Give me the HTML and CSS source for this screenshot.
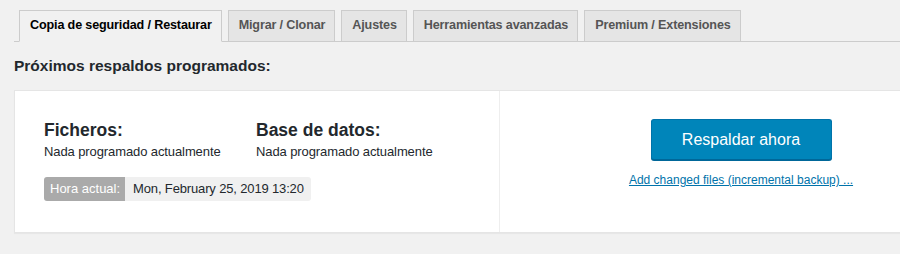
FILE: index.html
```html
<!DOCTYPE html>
<html lang="es">
<head>
<meta charset="utf-8">
<title>Copia de seguridad</title>
<link rel="stylesheet" href="styles.css">
</head>
<body>
<div class="wrap">
  <nav class="tabs">
    <a class="tab active">Copia de seguridad / Restaurar</a>
    <a class="tab">Migrar / Clonar</a>
    <a class="tab">Ajustes</a>
    <a class="tab">Herramientas avanzadas</a>
    <a class="tab">Premium / Extensiones</a>
  </nav>
  <h2 class="title">Próximos respaldos programados:</h2>
  <div class="panel">
    <div class="left">
      <div class="cols">
        <div class="col">
          <h3>Ficheros:</h3>
          <p>Nada programado actualmente</p>
        </div>
        <div class="col">
          <h3>Base de datos:</h3>
          <p>Nada programado actualmente</p>
        </div>
      </div>
      <div class="time"><span class="time-label">Hora actual:</span><span class="time-value">Mon, February 25, 2019 13:20</span></div>
    </div>
    <div class="right">
      <button class="btn">Respaldar ahora</button>
      <a class="inc" href="#">Add changed files (incremental backup) ...</a>
    </div>
  </div>
</div>
</body>
</html>
```
FILE: styles.css
```css
html, body {
  margin: 0;
  padding: 0;
  background: #f1f1f1;
  overflow: hidden;
}
body {
  font-family: "Liberation Sans", Arial, sans-serif;
  color: #23282d;
  width: 900px;
  height: 254px;
}
.wrap {
  padding: 10px 0 0 14px;
  width: 967px;
}
.tabs {
  display: flex;
  gap: 6px;
  padding-left: 5px;
  border-bottom: 1px solid #ccc;
  height: 31px;
}
.tab {
  box-sizing: border-box;
  height: 31px;
  padding: 0 9px 0 10px;
  font-size: 12.6px;
  letter-spacing: -0.15px;
  font-weight: 600;
  line-height: 29px;
  color: #555;
  background: #e5e5e5;
  border: 1px solid #ccc;
  border-bottom: none;
  white-space: nowrap;
}
.tab.active {
  background: #f1f1f1;
  color: #000;
  height: 32px;
  border-bottom: 1px solid #f1f1f1;
}
.title {
  margin: 14px 0 0 0;
  font-size: 15.5px;
  font-weight: 600;
  line-height: 20px;
  color: #23282d;
}
.panel {
  margin-top: 14px;
  display: grid;
  grid-template-columns: 485px 482px;
  background: #fff;
  border: 1px solid #e5e5e5;
  box-shadow: 0 1px 1px rgba(0,0,0,0.04);
  height: 143px;
  box-sizing: border-box;
}
.left {
  padding: 28px 0 0 29px;
  border-right: 1px solid #eee;
}
.cols {
  display: flex;
}
.col {
  width: 212px;
}
.col h3 {
  margin: 0;
  font-size: 17.5px;
  font-weight: 600;
  line-height: 22px;
  color: #23282d;
}
.col p {
  margin: 2px 0 0 0;
  font-size: 13px;
  letter-spacing: -0.1px;
  line-height: 18px;
  color: #23282d;
}
.time {
  margin-top: 16px;
  display: inline-flex;
  font-size: 13px;
  line-height: 24px;
  border-radius: 3px;
  overflow: hidden;
}
.time-label {
  background: #aaa;
  color: #fff;
  padding: 0 5px 0 6px;
}
.time-value {
  background: #f0f0f0;
  color: #23282d;
  letter-spacing: -0.15px;
  padding: 0 7px 0 8px;
}
.right {
  display: flex;
  flex-direction: column;
  align-items: center;
  padding-top: 28px;
}
.btn {
  width: 181px;
  height: 41px;
  background: #0085ba;
  border: 1px solid #0073aa;
  border-bottom-color: #006799;
  border-radius: 3px;
  box-shadow: 0 1px 0 #006799;
  color: #fff;
  font-family: "Liberation Sans", Arial, sans-serif;
  font-size: 16px;
  padding: 0;
}
.inc {
  margin-top: 12px;
  font-size: 12px;
  color: #0073aa;
  text-decoration: underline;
  line-height: 16px;
}
```
